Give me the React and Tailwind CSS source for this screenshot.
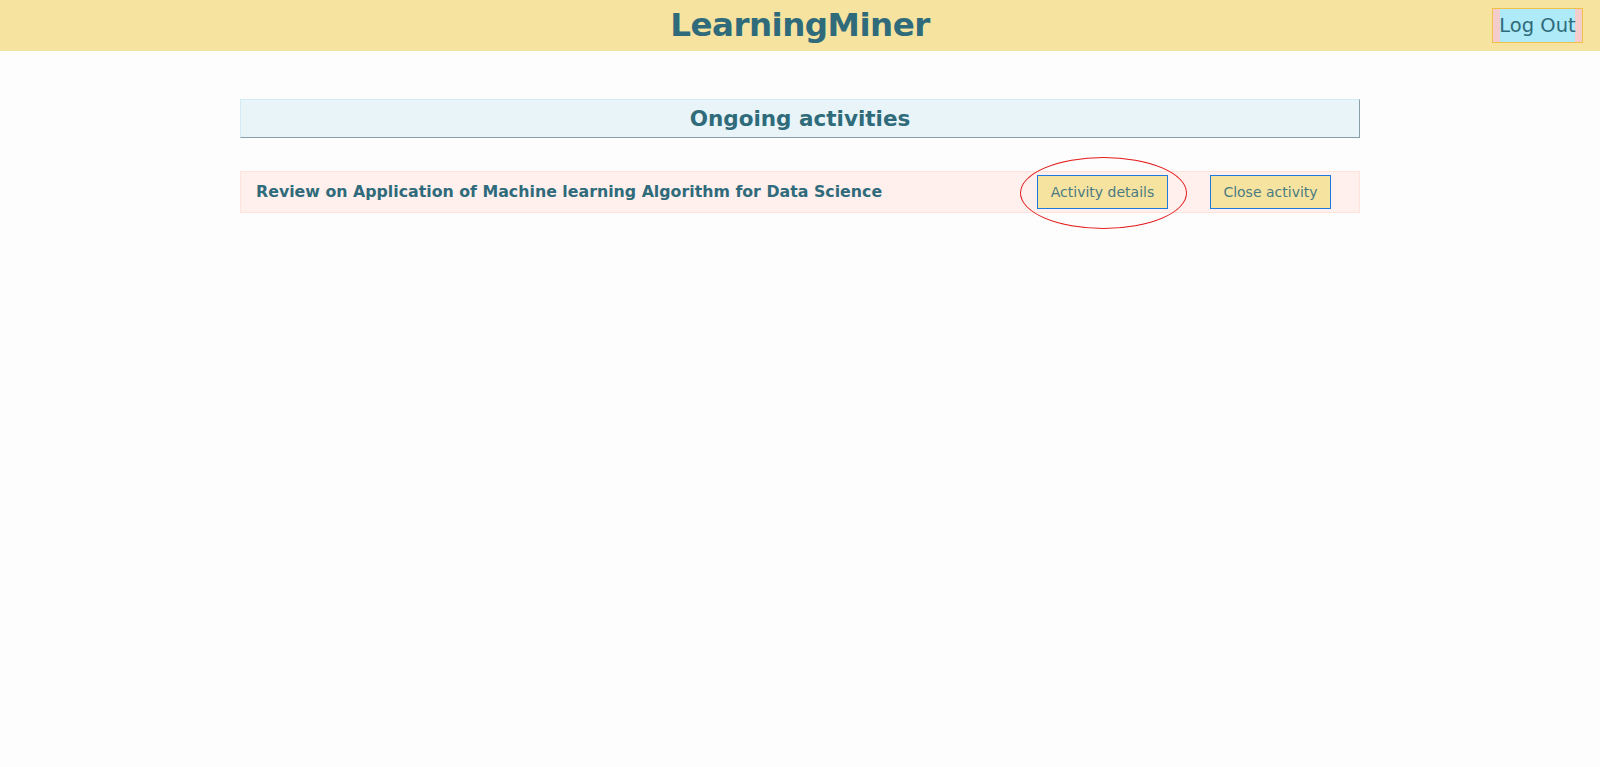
import React from 'react';

const font = { fontFamily: '"DejaVu Sans", "Open Sans", sans-serif' };

function Header() {
  return (
    <header className="relative h-[51px] bg-[#f7e3a0] flex items-center justify-center">
      <h1 className="text-[32.5px] font-bold text-[#2f6b7a] tracking-[-0.5px]">LearningMiner</h1>
      <button className="absolute right-[17px] top-[8px] h-[35px] w-[91px] border border-[#f2c14a] bg-[#f5cccc] px-[7px]">
        <span className="flex h-full items-center justify-center whitespace-nowrap bg-[#aeeaf8] text-[19.5px] text-[#2f6b7a]">
          Log Out
        </span>
      </button>
    </header>
  );
}

function ActivityRow({ title }) {
  return (
    <div className="mt-[33px] flex h-[42px] items-center border border-[#fde2de] bg-[#fff0ee] pl-[15px] pr-[28px]">
      <span className="flex-1 text-[15.8px] font-bold text-[#2f6b7a]">{title}</span>
      <div className="relative">
        <button className="h-[34px] w-[131px] border border-[#1f7ae0] bg-[#f7e3a0] text-[14px] text-[#4a7b82]">
          Activity details
        </button>
        <div className="pointer-events-none absolute left-[-17px] top-[-18px] h-[72px] w-[167px] rounded-[50%] border border-[#e31b1b]" />
      </div>
      <button className="ml-[42px] h-[34px] w-[121px] border border-[#1f7ae0] bg-[#f7e3a0] text-[14px] text-[#4a7b82]">
        Close activity
      </button>
    </div>
  );
}

export default function App() {
  return (
    <div className="min-h-screen bg-[#fdfdfd]" style={font}>
      <Header />
      <main className="mx-auto w-[70%] pt-[48px]">
        <div className="flex h-[39px] items-center justify-center border border-[#d3ebf4] border-b-[#8a9ea8] border-r-[#8a9ea8] bg-[#e8f4f8] pt-[2px]">
          <h2 className="text-[21.5px] font-bold text-[#2f6b7a]">Ongoing activities</h2>
        </div>
        <ActivityRow title="Review on Application of Machine learning Algorithm for Data Science" />
      </main>
    </div>
  );
}
